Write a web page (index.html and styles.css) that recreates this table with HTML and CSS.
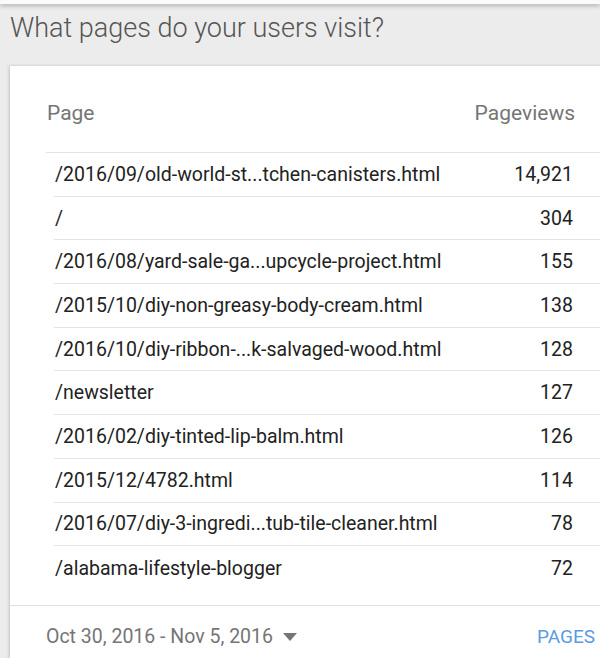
FILE: index.html
```html
<!DOCTYPE html>
<html>
<head>
<meta charset="utf-8">
<link rel="stylesheet" href="styles.css">
</head>
<body>
<div class="topbar"></div>
<div class="screen">
  <h1 class="title">What pages do your users visit?</h1>
  <div class="card">
    <div class="table">
      <div class="head">
        <span class="col-page">Page</span>
        <span class="col-views">Pageviews</span>
      </div>
      <div class="row"><span class="col-page">/2016/09/old-world-st...tchen-canisters.html</span><span class="num">14,921</span></div>
      <div class="row"><span class="col-page">/</span><span class="num">304</span></div>
      <div class="row"><span class="col-page">/2016/08/yard-sale-ga...upcycle-project.html</span><span class="num">155</span></div>
      <div class="row"><span class="col-page">/2015/10/diy-non-greasy-body-cream.html</span><span class="num">138</span></div>
      <div class="row"><span class="col-page">/2016/10/diy-ribbon-...k-salvaged-wood.html</span><span class="num">128</span></div>
      <div class="row"><span class="col-page">/newsletter</span><span class="num">127</span></div>
      <div class="row"><span class="col-page">/2016/02/diy-tinted-lip-balm.html</span><span class="num">126</span></div>
      <div class="row"><span class="col-page">/2015/12/4782.html</span><span class="num">114</span></div>
      <div class="row"><span class="col-page">/2016/07/diy-3-ingredi...tub-tile-cleaner.html</span><span class="num">78</span></div>
      <div class="row last"><span class="col-page">/alabama-lifestyle-blogger</span><span class="num">72</span></div>
    </div>
    <div class="footer">
      <span class="range">Oct 30, 2016 - Nov 5, 2016 <svg class="caret" width="14" height="8" viewBox="0 0 14 8"><path d="M0 0h14L7 8z" fill="#757575"/></svg></span>
      <span class="link">PAGES</span>
    </div>
  </div>
</div>
</body>
</html>
```
FILE: styles.css
```css
html, body {
  margin: 0;
  padding: 0;
}
body {
  width: 600px;
  height: 658px;
  overflow: hidden;
  background: #ececec;
  font-family: Roboto, "Liberation Sans", sans-serif;
}
.topbar {
  height: 4px;
  background: #fafafa;
  box-shadow: 0 2px 4px rgba(0,0,0,0.25);
  position: relative;
}
.screen {
  padding-left: 10px;
}
.title {
  margin: 0;
  padding-top: 6px;
  height: 56px;
  font-size: 27px;
  font-weight: 300;
  color: #555;
  line-height: 36px;
}
.card {
  margin-top: 0;
  width: 620px;
  background: #fff;
  box-shadow: -1px 0 3px rgba(0,0,0,0.18);
}
.table {
  padding: 0 0 0 36px;
}
.head {
  display: flex;
  justify-content: space-between;
  align-items: center;
  height: 86px;
  padding: 0 55px 0 1px;
  border-bottom: 1px solid #e4e4e4;
  font-size: 21px;
  color: #757575;
}
.head .col-page { padding-top: 8px; }
.head .col-views { padding-top: 8px; }
.row {
  display: flex;
  justify-content: space-between;
  align-items: center;
  height: 42.7px;
  margin-left: 8px;
  padding: 0 57px 0 1px;
  border-bottom: 1px solid #e4e4e4;
  font-size: 19.5px;
  color: #222;
}
.row.last {
  border-bottom: none;
  height: 59px;
  align-items: flex-start;
  padding-top: 11px;
  box-sizing: border-box;
}
.footer {
  display: flex;
  justify-content: space-between;
  align-items: center;
  height: 60px;
  border-top: 1px solid #e0e0e0;
  padding: 0 0 0 36px;
  font-size: 19.5px;
  color: #757575;
}
.range {
  display: flex;
  align-items: center;
  gap: 10px;
}
.caret {
  margin-top: 2px;
}
.link {
  color: #5b9be0;
  width: 93px;
  font-size: 19px;
}
```
